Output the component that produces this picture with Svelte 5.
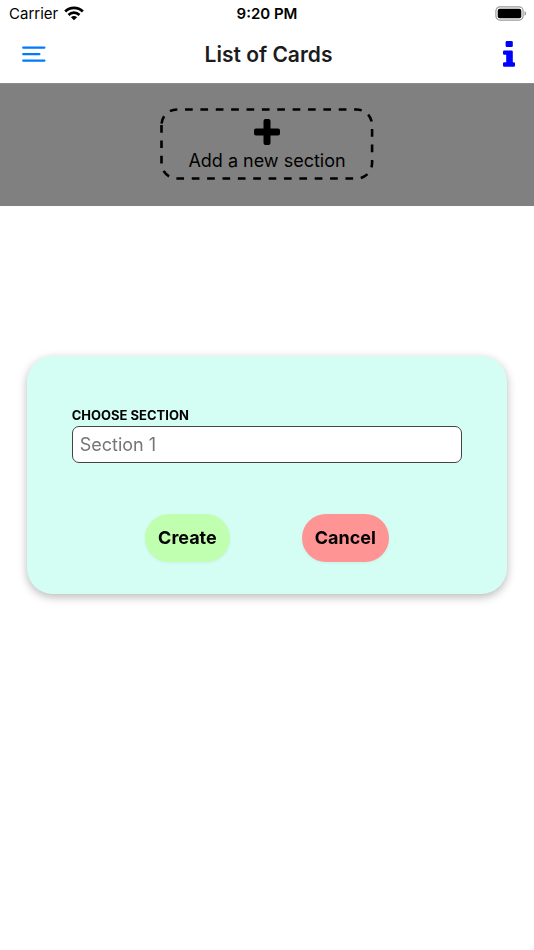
<script>
  let open = $state(true);
  let section = $state("");

  function close() {
    open = false;
    section = "";
  }

  function create(event) {
    event.preventDefault();
    close();
  }
</script>

<div class="status">
  <div class="carrier">
    <span>Carrier</span>
    <svg class="wifi" viewBox="0 0 20 15" aria-hidden="true">
      <path d="M1.2 5.4a12.6 12.6 0 0 1 17.6 0" />
      <path d="M4.5 8.9a8 8 0 0 1 11 0" />
      <path class="dot" d="M10 14.3 6.9 11.3a4.4 4.4 0 0 1 6.2 0z" />
    </svg>
  </div>
  <time>9:20 PM</time>
  <svg class="battery" viewBox="0 0 32 15" aria-hidden="true">
    <rect class="case" x="0.9" y="0.9" width="27.2" height="13.2" rx="4" />
    <rect x="2.7" y="2.7" width="23.6" height="9.6" rx="2" />
    <path class="tip" d="M29.5 5.2q1.6.6 1.6 2.3t-1.6 2.3z" />
  </svg>
</div>

<header>
  <button class="icon" aria-label="Menu">
    <svg class="menu" viewBox="0 0 24 18" aria-hidden="true">
      <path d="M1.3 2.6h21M1.3 9.1h16M1.3 15.6h21" />
    </svg>
  </button>
  <h1>List of Cards</h1>
  <button class="icon" aria-label="Information">
    <svg class="info" viewBox="0 0 12 26" aria-hidden="true">
      <rect x="2.6" y="0" width="7.2" height="6" rx="1.3" />
      <path
        d="M1.3 9.5h7.2a1.3 1.3 0 0 1 1.3 1.3v10.400h.9a1.3 1.3 0 0 1 1.3 1.3v1.900a1.3 1.3 0 0 1-1.3 1.3H1.3a1.3 1.3 0 0 1-1.3-1.3v-1.900a1.3 1.3 0 0 1 1.3-1.3h1.900v-7.400H1.3a1.3 1.3 0 0 1-1.3-1.3v-1.700a1.3 1.3 0 0 1 1.3-1.3z"
      />
    </svg>
  </button>
</header>

<main>
  <button class="add" onclick={() => (open = true)}>
    <svg
      class="outline"
      viewBox="0 0 214 72"
      preserveAspectRatio="none"
      aria-hidden="true"
    >
      <path
        d="M1.5 17v38a15.5 15.5 0 0 0 15.5 15.5h180a15.5 15.5 0 0 0 15.5-15.5V17a15.5 15.5 0 0 0-15.5-15.5H17a15.5 15.5 0 0 0-15.5 15.5"
      />
    </svg>
    <svg class="plus" viewBox="0 0 26 26" aria-hidden="true">
      <path
        d="M11.5 0h3a2 2 0 0 1 2 2v7.5H24a2 2 0 0 1 2 2v3a2 2 0 0 1-2 2h-7.5V24a2 2 0 0 1-2 2h-3a2 2 0 0 1-2-2v-7.5H2a2 2 0 0 1-2-2v-3a2 2 0 0 1 2-2h7.5V2a2 2 0 0 1 2-2z"
      />
    </svg>
    <span>Add a new section</span>
  </button>
</main>

{#if open}
  <div class="overlay">
    <form class="dialog" onsubmit={create}>
      <label for="section">CHOOSE SECTION</label>
      <input
        id="section"
        type="text"
        placeholder="Section 1"
        bind:value={section}
      />
      <div class="actions">
        <button class="create" type="submit">Create</button>
        <button class="cancel" type="button" onclick={close}>Cancel</button>
      </div>
    </form>
  </div>
{/if}

<style>
  :global(body) {
    background-color: #fff;
    color: #000;
    font-family: Inter, "Liberation Sans", sans-serif;
  }

  button {
    border: none;
    padding: 0;
    background: none;
    color: inherit;
    font: inherit;
    cursor: pointer;
  }

  svg {
    display: block;
  }

  .status {
    display: grid;
    grid-template-columns: 1fr auto 1fr;
    align-items: center;
    height: 27px;
    padding: 0 7px;
    font-size: 15px;
  }

  .carrier {
    display: flex;
    align-items: center;
    gap: 6px;
    padding-left: 2px;
  }

  time {
    font-weight: 600;
  }

  .wifi {
    width: 20px;
    height: 15px;
    fill: none;
    stroke: #000;
    stroke-width: 2.8;
  }

  .wifi .dot {
    fill: #000;
    stroke: none;
  }

  .battery {
    justify-self: end;
    width: 32px;
    height: 15px;
  }

  .battery .case {
    fill: none;
    stroke: #999;
    stroke-width: 1.2;
  }

  .battery .tip {
    fill: #999;
  }

  header {
    display: grid;
    grid-template-columns: 1fr auto 1fr;
    align-items: center;
    height: 54px;
    padding: 0 19px 2px 22px;
  }

  h1 {
    margin: 0;
    color: #1c1c1e;
    font-size: 21px;
    font-weight: 600;
  }

  .icon {
    justify-self: start;
  }

  .icon:last-child {
    justify-self: end;
  }

  .menu {
    width: 24px;
    height: 18px;
    fill: none;
    stroke: #007aff;
    stroke-width: 2.4;
    stroke-linecap: round;
  }

  .info {
    width: 12px;
    height: 26px;
    fill: #00f;
  }

  main {
    display: flex;
    justify-content: center;
    padding: 24px 0 26px;
    border-top: 1px solid #8c8c8c;
    background-color: #808080;
  }

  .add {
    position: relative;
    display: flex;
    flex-direction: column;
    align-items: center;
    gap: 4px;
    width: 40%;
    padding: 11px 0 8px;
    font-size: 18px;
    line-height: 23px;
  }

  .outline {
    position: absolute;
    inset: 0;
    width: 100%;
    height: 100%;
    fill: none;
    stroke: #000;
    stroke-width: 2.6;
    stroke-dasharray: 7.7;
  }

  .plus {
    width: 26px;
    height: 26px;
  }

  .overlay {
    position: fixed;
    inset: 0;
    display: flex;
    align-items: center;
    justify-content: center;
  }

  .dialog {
    box-sizing: border-box;
    width: 90%;
    padding: 51px 45px 32px;
    border-radius: 26px;
    background-color: #d4fef4;
    box-shadow: 0 3px 10px rgba(0, 0, 0, 0.28);
  }

  label {
    display: block;
    margin-bottom: 2px;
    font-size: 13px;
    font-weight: 700;
    line-height: 17px;
  }

  input {
    display: block;
    box-sizing: border-box;
    width: 100%;
    height: 37px;
    padding: 0 7px;
    border: 1px solid #444;
    border-radius: 7px;
    background-color: #fff;
    font: inherit;
    font-size: 18px;
  }

  input::placeholder {
    color: #757575;
  }

  .actions {
    display: flex;
    justify-content: center;
    gap: 72px;
    margin-top: 51px;
  }

  .actions button {
    padding: 0 13px;
    border-radius: 24px;
    font-size: 18px;
    font-weight: 700;
    line-height: 48px;
    box-shadow: 0 1px 3px rgba(0, 0, 0, 0.06);
  }

  .create {
    background-color: #c0ffb0;
  }

  .cancel {
    background-color: #ff9494;
  }
</style>
